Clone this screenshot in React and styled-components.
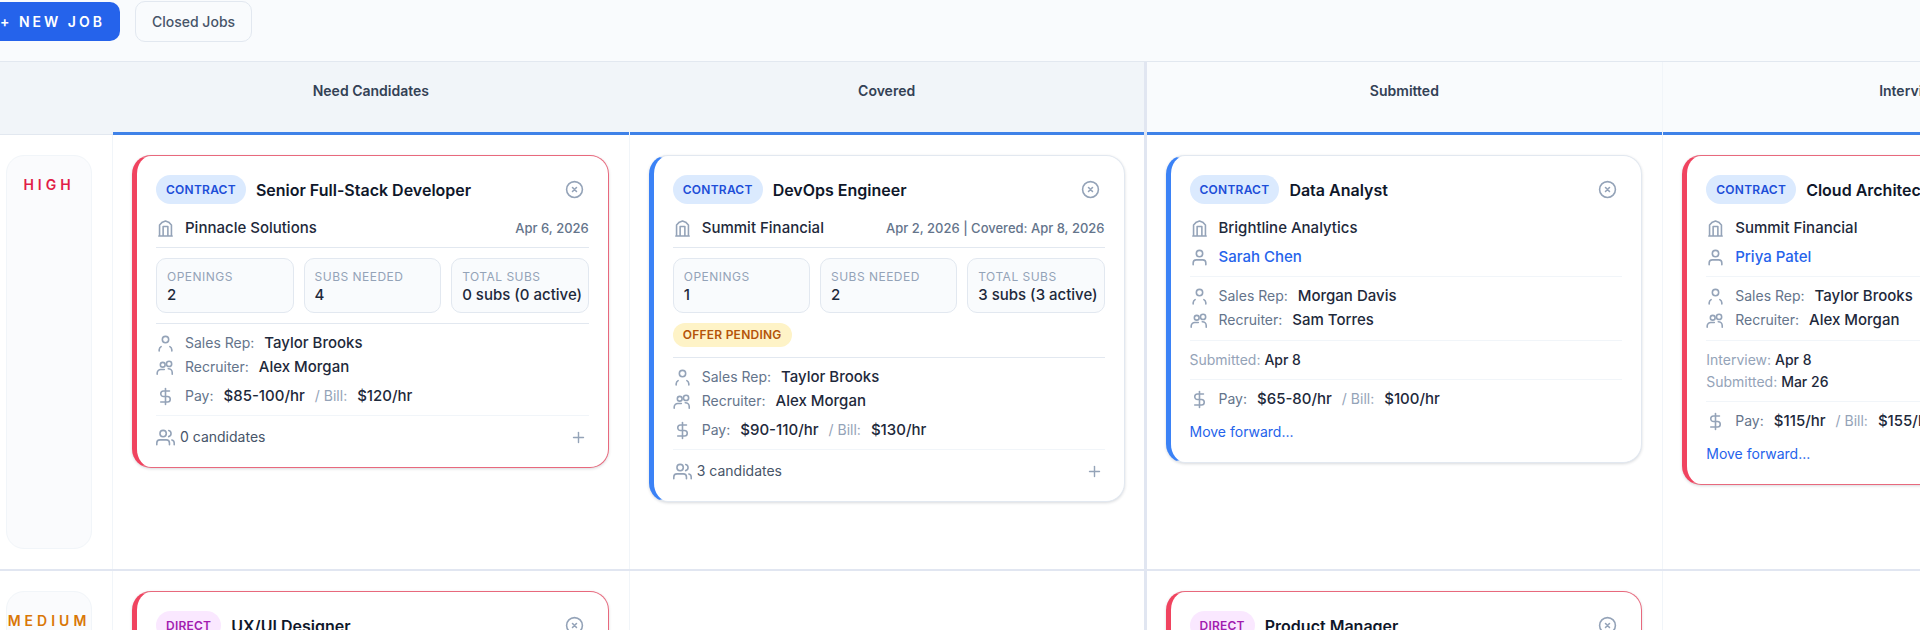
import React from "react";
import styled, { createGlobalStyle } from "styled-components";
import { DollarSign, Plus } from "lucide-react";

const GlobalStyle = createGlobalStyle`
  *, *::before, *::after {
    box-sizing: border-box;
  }
  body {
    margin: 0;
    background: #fff;
    color: #1e293b;
    font-family: Inter, "Liberation Sans", sans-serif;
    font-size: 14px;
    line-height: 24px;
    overflow: hidden;
  }
  button {
    font-family: inherit;
    cursor: pointer;
  }
`;

const Page = styled.div`
  min-height: 100vh;
  overflow: hidden;
`;

const Toolbar = styled.div`
  display: flex;
  align-items: center;
  gap: 15px;
  height: 62px;
  padding-bottom: 18px;
  background: #f9fbfd;
  border-bottom: 1px solid #e2e8f0;
`;

const NewJobButton = styled.button`
  height: 39px;
  margin-left: -24px;
  padding: 0 15px 0 24px;
  border: none;
  border-radius: 10px;
  background: #2563eb;
  color: #fff;
  font-size: 14px;
  font-weight: 600;
  letter-spacing: 3px;
`;

const ClosedButton = styled.button`
  height: 41px;
  padding: 0 16px;
  border: 1px solid #e2e8f0;
  border-radius: 10px;
  background: #f9fbfd;
  color: #475569;
  font-size: 14px;
  font-weight: 500;
`;

const Board = styled.div`
  width: calc(100% + 260px);
`;

const Row = styled.div`
  display: grid;
  grid-template-columns: 113px repeat(4, minmax(0, 1fr));
  border-bottom: 2px solid #e1e6f1;
`;

const HeaderRow = styled(Row)`
  border-bottom: none;
`;

const HeaderSpacer = styled.div`
  background: #f1f5f9;
  border-bottom: 1px solid #e2e8f0;
`;

const ColumnHeader = styled.div`
  height: 73px;
  padding-top: 17px;
  background: ${({ shaded }) => (shaded ? "#f1f5f9" : "#f9fbfd")};
  border-right: ${({ divider }) =>
    divider ? "3px solid #e1e6f1" : "1px solid #f1f5f9"};
  box-shadow: inset 0 -3px 0 #3f82e8;
  color: #334155;
  font-weight: 600;
  text-align: center;
`;

const LabelCell = styled.div`
  padding: 20px 20px 20px 6px;
  border-right: 1px solid #f1f5f9;
`;

const Priority = styled.div`
  height: 100%;
  min-height: 394px;
  padding-top: 17px;
  border: 1px solid #f1f5f9;
  border-radius: 18px;
  background: #fafbfd;
  color: ${({ color }) => color};
  font-weight: 600;
  letter-spacing: 4px;
  text-align: center;
`;

const Cell = styled.div`
  padding: 20px ${({ divider }) => (divider ? 19 : 20)}px 20px 19px;
  border-right: ${({ divider }) =>
    divider ? "3px solid #e1e6f1" : "1px solid #f1f5f9"};
`;

const Card = styled.article`
  padding: 19px 19px 18px;
  border: 1px solid ${({ urgent }) => (urgent ? "#e8697d" : "#e2e8f0")};
  border-left: 5px solid ${({ urgent }) => (urgent ? "#f0435f" : "#3b82f6")};
  border-radius: 19px;
  background: #fff;
  box-shadow: 0 1px 3px rgba(15, 23, 42, 0.16);
`;

const CardHead = styled.div`
  display: flex;
  align-items: center;
  gap: 10px;
  height: 29px;
  margin-bottom: 12px;
`;

const TypeBadge = styled.span`
  padding: 0 10px;
  border-radius: 15px;
  background: ${({ direct }) => (direct ? "#fae8ff" : "#dbeafe")};
  color: ${({ direct }) => (direct ? "#a21caf" : "#1d4ed8")};
  font-size: 12px;
  font-weight: 600;
  line-height: 29px;
  letter-spacing: 0.02em;
`;

const JobTitle = styled.h3`
  flex: 1;
  margin: 0;
  color: #0f172a;
  font-size: 16px;
  font-weight: 600;
`;

const IconButton = styled.button`
  display: flex;
  padding: ${({ pad }) => pad || 0}px;
  border: none;
  background: none;
  color: #94a3b8;
`;

const Line = styled.div`
  display: flex;
  align-items: center;
  gap: 10px;
  color: #64748b;
  strong {
    color: #1e293b;
    font-size: 15px;
    font-weight: 500;
  }
  svg {
    flex: none;
    color: #94a3b8;
  }
`;

const Company = styled.span`
  flex: 1;
  color: #1e293b;
  font-size: 15px;
  font-weight: 500;
`;

const Dates = styled.span`
  font-size: 13px;
  font-weight: 500;
`;

const CandidateLine = styled(Line)`
  margin-top: 5px;
`;

const CandidateLink = styled.a`
  color: #2563eb;
  font-size: 15px;
  font-weight: 500;
  text-decoration: none;
`;

const Section = styled.div`
  margin-top: ${({ gap }) => gap || 7}px;
  padding-top: ${({ pad }) => pad || 7}px;
  border-top: 1px solid ${({ strong }) => (strong ? "#e2e8f0" : "#f1f5f9")};
`;

const Stats = styled.dl`
  display: grid;
  grid-template-columns: repeat(3, minmax(0, 1fr));
  gap: 10px;
  margin: 0;
`;

const Stat = styled.div`
  height: 55px;
  padding: 9px 10px;
  border: 1px solid #e2e8f0;
  border-radius: 10px;
  background: #f9fbfd;
  line-height: 18px;
  white-space: nowrap;
  dt {
    color: #94a3b8;
    font-size: 12px;
    letter-spacing: 0.04em;
  }
  dd {
    margin: 0;
    font-size: 15px;
    font-weight: 500;
  }
`;

const OfferBadge = styled.span`
  display: block;
  width: fit-content;
  margin-top: 10px;
  padding: 0 10px;
  border-radius: 12px;
  background: #fef3c7;
  color: #b45309;
  font-size: 12px;
  font-weight: 600;
  line-height: 24px;
  letter-spacing: 0.02em;
`;

const PayLine = styled(Line)`
  margin-top: ${({ top }) => top || 0}px;
  em {
    color: #94a3b8;
    font-style: normal;
  }
`;

const Milestone = styled.div`
  color: #94a3b8;
  line-height: 22px;
  strong {
    color: #1e293b;
    font-weight: 500;
  }
`;

const MoveButton = styled.button`
  display: block;
  margin-top: 9px;
  padding: 0;
  border: none;
  background: none;
  color: #2563eb;
  font-size: 14px;
  line-height: 24px;
`;

const Candidates = styled.div`
  display: flex;
  align-items: center;
  gap: 5px;
  color: #475569;
  span {
    flex: 1;
  }
  svg {
    color: #94a3b8;
  }
`;

const Icon = ({ children, size = 19, width = 2 }) => (
  <svg
    width={size}
    height={size}
    viewBox="0 0 24 24"
    fill="none"
    stroke="currentColor"
    strokeWidth={width}
    strokeLinecap="round"
    strokeLinejoin="round"
    aria-hidden="true"
  >
    {children}
  </svg>
);

const BuildingIcon = () => (
  <Icon>
    <path d="M3.500 21.500h17M4.500 21V7.500L8 4l4-1.500L16 4l3.500 3.500V21M9 21V9.500h6V21" />
  </Icon>
);

const PersonIcon = () => (
  <Icon>
    <path d="M20 21v-2a4 4 0 0 0-4-4H8a4 4 0 0 0-4 4v2" />
    <circle cx="12" cy="7" r="4" />
  </Icon>
);

const RepIcon = () => (
  <Icon>
    <circle cx="12" cy="7" r="4" />
    <path d="M4 21.500v-1.500a5 5 0 0 1 2.500-4M20 21.500v-1.500a5 5 0 0 0-2.500-4" />
  </Icon>
);

const RecruiterIcon = () => (
  <Icon>
    <circle cx="8.500" cy="8.500" r="3" />
    <circle cx="16.500" cy="7.500" r="3.300" />
    <path d="M1.500 20.500V19a4.500 4.500 0 0 1 4.500-4.500h4.500M15.500 13.500a5 5 0 0 1 5 5v2" />
  </Icon>
);

const UsersIcon = () => (
  <Icon>
    <path d="M17 21v-2a4 4 0 0 0-4-4H5a4 4 0 0 0-4 4v2" />
    <circle cx="9" cy="7" r="4" />
    <path d="M23 21v-2a4 4 0 0 0-3-3.870M16 3.130a4 4 0 0 1 0 7.750" />
  </Icon>
);

const CloseIcon = () => (
  <Icon>
    <circle cx="12" cy="12" r="10" />
    <path d="M14.500 9.500l-5 5M9.500 9.500l5 5" />
  </Icon>
);

const columns = [
  { id: "need", title: "Need Candidates", shaded: true },
  { id: "covered", title: "Covered", shaded: true, divider: true },
  { id: "submitted", title: "Submitted" },
  { id: "interview", title: "Interviewing" }
];

const rows = [
  {
    name: "HIGH",
    color: "#e11d48",
    jobs: {
      need: {
        urgent: true,
        title: "Senior Full-Stack Developer",
        company: "Pinnacle Solutions",
        dates: "Apr 6, 2026",
        stats: ["2", "4", "0 subs (0 active)"],
        rep: "Taylor Brooks",
        recruiter: "Alex Morgan",
        pay: "$85-100/hr",
        bill: "$120/hr",
        candidates: 0
      },
      covered: {
        title: "DevOps Engineer",
        company: "Summit Financial",
        dates: "Apr 2, 2026 | Covered: Apr 8, 2026",
        stats: ["1", "2", "3 subs (3 active)"],
        offer: true,
        rep: "Taylor Brooks",
        recruiter: "Alex Morgan",
        pay: "$90-110/hr",
        bill: "$130/hr",
        candidates: 3
      },
      submitted: {
        title: "Data Analyst",
        company: "Brightline Analytics",
        candidate: "Sarah Chen",
        rep: "Morgan Davis",
        recruiter: "Sam Torres",
        milestones: [["Submitted", "Apr 8"]],
        pay: "$65-80/hr",
        bill: "$100/hr"
      },
      interview: {
        urgent: true,
        title: "Cloud Architect",
        company: "Summit Financial",
        candidate: "Priya Patel",
        rep: "Taylor Brooks",
        recruiter: "Alex Morgan",
        milestones: [
          ["Interview", "Apr 8"],
          ["Submitted", "Mar 26"]
        ],
        pay: "$115/hr",
        bill: "$155/hr"
      }
    }
  },
  {
    name: "MEDIUM",
    color: "#d97706",
    jobs: {
      need: { urgent: true, direct: true, title: "UX/UI Designer" },
      submitted: { urgent: true, direct: true, title: "Product Manager" }
    }
  }
];

const statLabels = ["OPENINGS", "SUBS NEEDED", "TOTAL SUBS"];

const Pay = ({ job, top }) => (
  <PayLine top={top}>
    <DollarSign size={19} />
    <span>Pay:</span>
    <strong>{job.pay}</strong>
    <em>/ Bill:</em>
    <strong>{job.bill}</strong>
  </PayLine>
);

const Team = ({ job }) => (
  <>
    <Line>
      <RepIcon />
      <span>Sales Rep:</span>
      <strong>{job.rep}</strong>
    </Line>
    <Line>
      <RecruiterIcon />
      <span>Recruiter:</span>
      <strong>{job.recruiter}</strong>
    </Line>
  </>
);

const OpenJobBody = ({ job }) => (
  <>
    <Section strong pad={10}>
      <Stats>
        {job.stats.map((value, i) => (
          <Stat key={statLabels[i]}>
            <dt>{statLabels[i]}</dt>
            <dd>{value}</dd>
          </Stat>
        ))}
      </Stats>
      {job.offer && <OfferBadge>OFFER PENDING</OfferBadge>}
    </Section>
    <Section strong gap={10}>
      <Team job={job} />
      <Pay job={job} top={5} />
    </Section>
    <Section pad={9}>
      <Candidates>
        <UsersIcon />
        <span>{job.candidates} candidates</span>
        <IconButton pad={2} aria-label="Add candidate">
          <Plus size={17} />
        </IconButton>
      </Candidates>
    </Section>
  </>
);

const SubmissionBody = ({ job }) => (
  <>
    <CandidateLine>
      <PersonIcon />
      <CandidateLink href="#candidate">{job.candidate}</CandidateLink>
    </CandidateLine>
    <Section>
      <Team job={job} />
    </Section>
    <Section gap={8} pad={8}>
      {job.milestones.map(([label, date]) => (
        <Milestone key={label}>
          {label}: <strong>{date}</strong>
        </Milestone>
      ))}
    </Section>
    <Section gap={8}>
      <Pay job={job} />
      <MoveButton>Move forward...</MoveButton>
    </Section>
  </>
);

const JobCard = ({ job }) => (
  <Card urgent={job.urgent}>
    <CardHead>
      <TypeBadge direct={job.direct}>
        {job.direct ? "DIRECT" : "CONTRACT"}
      </TypeBadge>
      <JobTitle>{job.title}</JobTitle>
      <IconButton pad={5} aria-label="Close job">
        <CloseIcon />
      </IconButton>
    </CardHead>
    {job.company && (
      <Line>
        <BuildingIcon />
        <Company>{job.company}</Company>
        {job.dates && <Dates>{job.dates}</Dates>}
      </Line>
    )}
    {job.stats && <OpenJobBody job={job} />}
    {job.candidate && <SubmissionBody job={job} />}
  </Card>
);

export default function App() {
  return (
    <Page>
      <GlobalStyle />
      <Toolbar>
        <NewJobButton>+ NEW JOB</NewJobButton>
        <ClosedButton>Closed Jobs</ClosedButton>
      </Toolbar>
      <Board>
        <HeaderRow>
          <HeaderSpacer />
          {columns.map(col => (
            <ColumnHeader
              key={col.id}
              shaded={col.shaded}
              divider={col.divider}
            >
              {col.title}
            </ColumnHeader>
          ))}
        </HeaderRow>
        {rows.map(row => (
          <Row key={row.name}>
            <LabelCell>
              <Priority color={row.color}>{row.name}</Priority>
            </LabelCell>
            {columns.map(col => (
              <Cell key={col.id} divider={col.divider}>
                {row.jobs[col.id] && <JobCard job={row.jobs[col.id]} />}
              </Cell>
            ))}
          </Row>
        ))}
      </Board>
    </Page>
  );
}
